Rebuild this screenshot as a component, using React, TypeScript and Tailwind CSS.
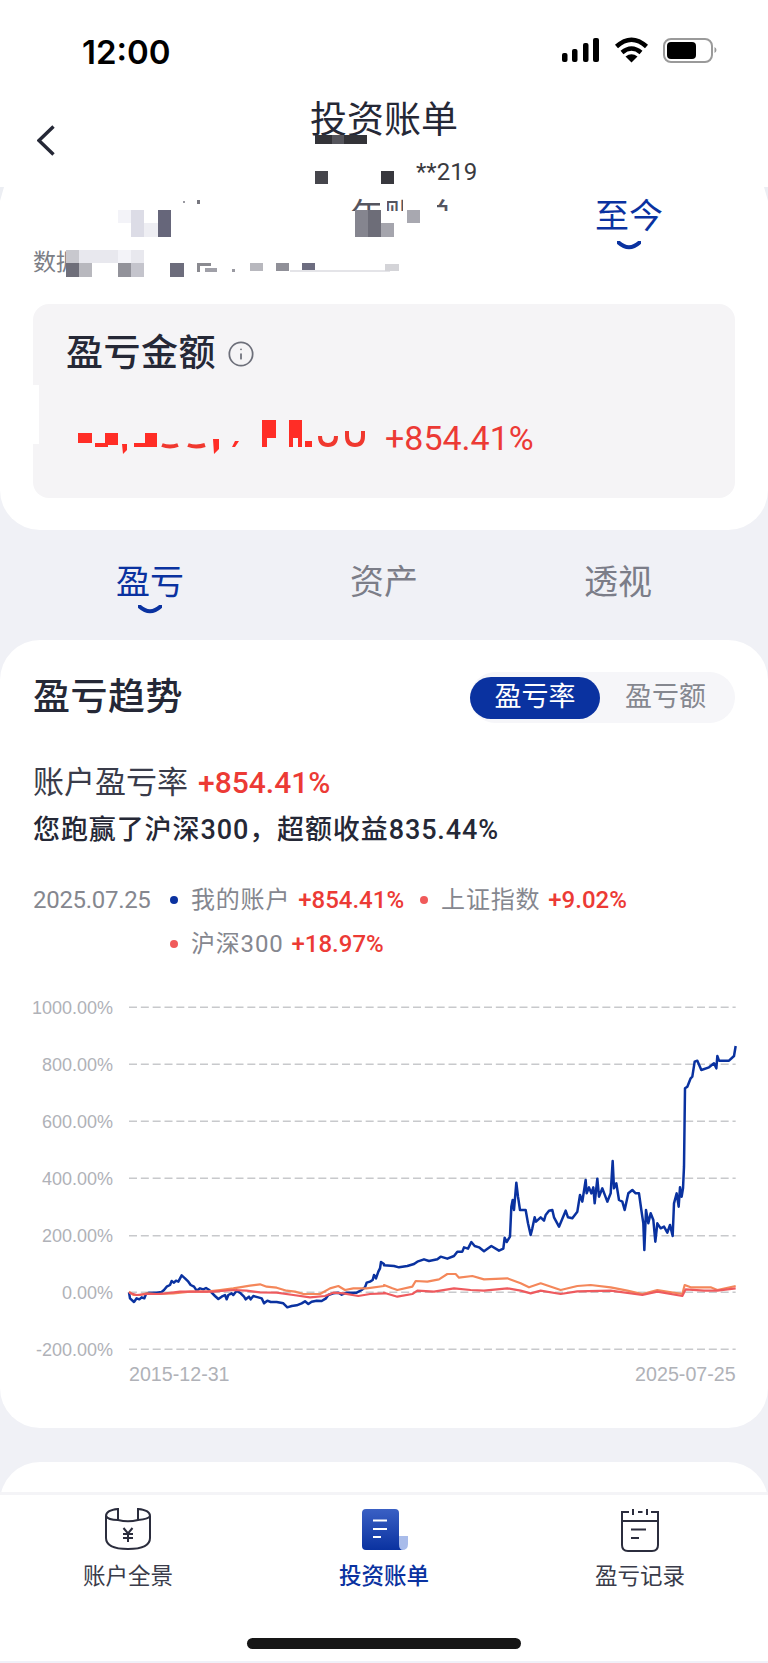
import { Info } from "lucide-react";

type Pt = [number, number];

// chart paths, in a 2304x1260 drawing space; the second half of each series starts at x=1152
const blueLeft: Pt[] = [[387,937],[390,955],[402,966],[410,955],[418,958],[425,952],[433,955],[438,942],[448,938],[470,938],[485,936],[492,930],[500,920],[510,915],[515,903],[522,908],[528,902],[535,905],[545,886],[555,895],[565,905],[572,915],[582,920],[590,932],[600,925],[610,928],[618,924],[628,930],[635,938],[645,948],[655,957],[665,950],[675,945],[680,958],[685,945],[695,940],[700,945],[710,932],[722,940],[732,950],[737,958],[747,950],[752,958],[760,948],[775,952],[785,955],[792,970],[802,962],[812,966],[830,966],[850,970],[862,982],[875,978],[890,976],[905,970],[915,964],[925,972],[935,965],[950,962],[965,963],[978,955],[985,945],[1000,940],[1015,938],[1025,944],[1040,938],[1055,938],[1070,938],[1085,930],[1095,922],[1100,908],[1110,905],[1118,900],[1122,885],[1128,895],[1135,875],[1140,865],[1143,846],[1152,852]];
const blueRight: Pt[] = [[0,856],[30,858],[45,862],[70,858],[90,852],[100,845],[120,838],[135,843],[160,838],[170,830],[190,836],[210,828],[220,815],[235,815],[240,802],[252,806],[262,786],[272,798],[285,802],[300,814],[322,798],[345,812],[358,806],[362,773],[368,786],[378,770],[382,680],[386,660],[390,690],[397,608],[402,650],[408,690],[415,690],[425,690],[432,730],[440,765],[445,745],[452,712],[456,725],[470,712],[480,722],[485,705],[495,692],[505,690],[510,712],[525,740],[545,692],[552,712],[565,715],[580,695],[588,645],[595,665],[605,600],[608,640],[615,622],[622,640],[628,622],[632,670],[640,596],[645,650],[655,625],[670,665],[680,640],[686,543],[690,625],[697,610],[705,660],[715,665],[722,690],[733,640],[745,630],[755,640],[765,640],[772,690],[778,730],[781,810],[786,690],[793,730],[800,700],[808,720],[814,785],[820,730],[830,745],[840,740],[850,758],[858,735],[866,768],[870,670],[878,640],[884,680],[888,622],[893,650],[897,625],[900,560],[903,325],[910,320],[920,295],[925,290],[932,245],[940,242],[952,270],[975,262],[990,250],[997,265],[1000,228],[1005,242],[1035,242],[1050,228],[1055,198]];
const orangeLeft: Pt[] = [[387,935],[400,945],[420,945],[440,940],[470,942],[520,940],[570,935],[620,935],[660,930],[700,925],[750,917],[780,913],[800,920],[830,923],[860,932],[885,935],[910,942],[960,942],[990,925],[1015,918],[1035,930],[1060,925],[1100,925],[1152,918]];
const orangeRight: Pt[] = [[0,915],[25,925],[40,930],[85,920],[95,903],[130,905],[165,898],[190,882],[215,882],[225,893],[265,888],[300,898],[370,895],[410,910],[435,922],[470,910],[530,930],[580,918],[620,915],[680,922],[730,932],[775,942],[820,930],[895,942],[902,915],[920,922],[980,922],[1000,930],[1055,918]];
const redLeft: Pt[] = [[387,938],[410,945],[440,942],[480,942],[540,935],[600,935],[640,935],[700,930],[740,932],[780,937],[830,938],[880,945],[930,952],[975,948],[1000,938],[1030,940],[1075,948],[1110,942],[1152,940]];
const redRight: Pt[] = [[0,938],[40,950],[85,942],[100,932],[150,935],[210,925],[260,930],[300,932],[370,925],[410,932],[440,940],[470,932],[530,942],[580,934],[680,932],[775,945],[820,935],[895,948],[905,928],[960,932],[1000,932],[1055,925]];

const toPoints = (left: Pt[], right: Pt[]) =>
  [...left, ...right.map(([x, y]): Pt => [x + 1152, y])].map((p) => p.join(",")).join(" ");

const yLabels = ["1000.00%", "800.00%", "600.00%", "400.00%", "200.00%", "0.00%", "-200.00%"];
const yLines = [82, 253, 424, 595, 767, 937, 1108];

// masked-out blocks in the header, page coordinates
const cells: [number, number, number, number, string][] = [
  [315, 135, 17, 9, "#333338"], [332, 135, 12, 9, "#55555c"], [344, 135, 23, 9, "#333338"],
  [315, 171, 13, 13, "#46464c"], [381, 171, 13, 13, "#38383e"],
  [118, 210, 13, 13, "#f3f3f8"], [131, 210, 13, 27, "#dcdce6"], [144, 223, 14, 14, "#eeeef3"], [158, 210, 13, 27, "#66667a"],
  [183, 201, 2, 2, "#9a9aa2"], [197, 200, 3, 4, "#77777f"],
  [350, 211, 104, 32, "#ffffff"], [380, 194, 7, 18, "#ffffff"], [403, 194, 34, 18, "#ffffff"],
  [355, 210, 13, 27, "#85858f"], [368, 210, 13, 27, "#6d6d78"], [381, 223, 13, 14, "#a5a5ad"], [407, 210, 13, 13, "#a8a8b0"],
  [66, 250, 13, 13, "#c8c8ce"], [66, 263, 13, 14, "#6f6f7a"], [79, 263, 13, 14, "#b8b8be"], [79, 250, 39, 13, "#e8e8ee"],
  [118, 250, 13, 13, "#f3f3f8"], [131, 250, 13, 13, "#e8e8ee"], [118, 263, 13, 14, "#92929a"], [131, 263, 13, 14, "#c4c4cc"],
  [170, 263, 14, 14, "#6d6d7c"], [197, 263, 14, 3, "#8a8a90"], [197, 266, 3, 6, "#8a8a90"], [205, 268, 12, 4, "#a0a0a8"],
  [232, 269, 3, 3, "#9a9aa2"], [250, 263, 13, 8, "#b8b8be"], [276, 263, 13, 8, "#909098"], [302, 263, 13, 8, "#6d6d80"],
  [290, 270, 100, 2, "#e4e4e8"], [385, 264, 14, 7, "#d4d4d8"],
  [33, 385, 6, 59, "#ffffff"],
];

// masked-out amount, page coordinates
const amountCells: [number, number, number, number][] = [
  [78, 433, 14, 10], [95, 443, 13, 4], [105, 433, 13, 12], [145, 433, 12, 14], [134, 443, 11, 4],
  [262, 420, 14, 18], [262, 438, 5, 9], [289, 420, 13, 18], [289, 438, 4, 9], [298, 438, 4, 9], [305, 441, 7, 6],
];

const Redactions = () => (
  <svg className="absolute left-0 top-0 w-[768px] h-[530px] pointer-events-none" viewBox="0 0 768 530">
    <path d="M0 201 L4 187 L0 187 Z M768 201 L764 187 L768 187 Z" fill="#eceef3" />
    {cells.map(([x, y, w, h, fill], i) => (
      <rect key={i} x={x} y={y} width={w} height={h} fill={fill} />
    ))}
    <g fill="#ff2d26">
      {amountCells.map(([x, y, w, h], i) => (
        <rect key={i} x={x} y={y} width={w} height={h} />
      ))}
      <path d="M122 444h5v6l-4 4zM213 439h6v10l-5 5zM235 441h4l-4 6h-3z" />
    </g>
    <g fill="none" stroke="#f0382f" strokeWidth="4">
      <path d="M162 445q8 3 16 0M188 445q8 3 17 0M320 436q0 9 8 9t8-9M347 431v5q0 9 8 9t8-9v-5" />
    </g>
  </svg>
);

const StatusIcons = () => (
  <svg className="w-[158px] h-[30px]" viewBox="560 36 158 30">
    <g fill="#000">
      <rect x="562" y="54" width="5.5" height="9" rx="2" />
      <rect x="572" y="50" width="5.5" height="13" rx="2" />
      <rect x="583" y="44" width="5.5" height="19" rx="2" />
      <rect x="593" y="39" width="6" height="24" rx="2" />
      <path d="M625.5 57.5 L631.5 63.5 L637.5 57.5 Q631.5 53 625.5 57.5 Z" />
    </g>
    <g fill="none" stroke="#000" strokeWidth="4.5">
      <path d="M616.5 47.5 Q631.5 34 646.5 47.5" />
      <path d="M622 53.5 Q631.5 45.5 641 53.5" />
    </g>
    <rect x="664" y="40" width="48" height="23" rx="7" fill="none" stroke="#9a9a9a" strokeWidth="2" />
    <rect x="667" y="43" width="29" height="17" rx="4" fill="#000" />
    <path d="M714.5 48v6q2-1 2-3t-2-3z" fill="#9a9a9a" />
  </svg>
);

const Smile = () => (
  <svg className="block w-[24px] h-[9px]" viewBox="0 0 24 9">
    <path d="M1.5 1.5 Q12 11 22.5 1.5" fill="none" stroke="#0a32a0" strokeWidth="4" strokeLinecap="round" />
  </svg>
);

const WalletIcon = () => (
  <svg className="w-[46px] h-[44px]" viewBox="15 12 46 44" fill="none" stroke="#2b2d3d" strokeWidth="2">
    <path d="M16 20 Q16 14 28 13 V24 Q18 24 16 20 V42 Q16 53 38 53 Q60 53 60 42 V20 Q59 23 48 24 V13 Q60 14 60 20" />
    <path d="M28 24 Q38 26.5 48 24" />
    <path d="M33.5 32 L38 37.5 L42.5 32 M38 37.5 V46 M33 38 H43 M33 42 H43" />
  </svg>
);

const BillIcon = () => (
  <svg className="w-[50px] h-[44px]" viewBox="18 12 50 44">
    <defs>
      <linearGradient id="billBody" x1="0" y1="0" x2="0" y2="1">
        <stop offset="0" stopColor="#3a60c4" />
        <stop offset="1" stopColor="#0a32a0" />
      </linearGradient>
    </defs>
    <path d="M58 40 H67 V48 Q67 54 61 54 H58 Z" fill="#a9bcea" />
    <path d="M25 13 H54 a4 4 0 0 1 4 4 V48 q0 6 4 6 H25 a4 4 0 0 1 -4 -4 V17 a4 4 0 0 1 4 -4 z" fill="url(#billBody)" />
    <g stroke="#fff" strokeWidth="2">
      <path d="M32 24.5 H46 M32 33 H46 M32 41 H40" />
    </g>
  </svg>
);

const RecordIcon = () => (
  <svg className="w-[46px] h-[44px]" viewBox="17 11 46 44" fill="none" stroke="#2b2d3d" strokeWidth="2">
    <path d="M22 24 V48 Q22 54 28 54 H52 Q58 54 58 48 V24 H22 V15 H29 M51 15 H58 V24" />
    <path d="M33 12 V18 M47 12 V18 M38 15 H42.5" />
    <path d="M31 32.5 H46 M31 41 H39" />
  </svg>
);

const TrendChart = () => (
  <svg className="block w-[768px] h-[420px] -mx-[33px]" viewBox="0 0 2304 1260">
    {yLines.map((y, i) => (
      <g key={y}>
        <line x1="387" x2="2207" y1={y} y2={y} stroke="#c8c9cc" strokeWidth="4.5" strokeDasharray="24 11.5" />
        <text x="339" y={y + 19} textAnchor="end" fontSize="54" fill="#b0b2b8" className="font-['Liberation_Sans',sans-serif]">
          {yLabels[i]}
        </text>
      </g>
    ))}
    <polyline points={toPoints(blueLeft, blueRight)} fill="none" stroke="#0a32a0" strokeWidth="7.5" strokeLinejoin="round" />
    <polyline points={toPoints(orangeLeft, orangeRight)} fill="none" stroke="#f4875a" strokeWidth="6.5" strokeLinejoin="round" />
    <polyline points={toPoints(redLeft, redRight)} fill="none" stroke="#ee5a5e" strokeWidth="6.5" strokeLinejoin="round" />
    <text x="387" y="1202" fontSize="59" fill="#b0b2b8" className="font-['Liberation_Sans',sans-serif]">2015-12-31</text>
    <text x="2207" y="1202" textAnchor="end" fontSize="59" fill="#b0b2b8" className="font-['Liberation_Sans',sans-serif]">2025-07-25</text>
  </svg>
);

const LegendItem = ({ dot, label, value, className }: { dot: string; label: string; value: string; className: string }) => (
  <div className={`flex items-center ${className}`}>
    <span className={`w-[8px] h-[8px] rounded-full ${dot}`} />
    <span className="ml-[13px] text-[24px] leading-[30px] tracking-[0.8px] text-[#85878f]">{label}</span>
    <span className="ml-[8px] text-[24px] leading-[30px] font-medium text-[#ec3a35]">{value}</span>
  </div>
);

export default function App() {
  return (
    <div className="relative w-[768px] h-[1663px] flex flex-col overflow-hidden bg-[#f0f1f6] text-[#252836] font-['Roboto','Noto_Sans_CJK_SC',sans-serif]">
      <div className="flex-1 overflow-hidden">
        <header className="h-[187px] bg-white">
          <div className="h-[104px] flex items-center justify-between pl-[82px] pr-[50px]">
            <span className="mt-[2px] text-[33px] font-semibold text-black font-['Inter',sans-serif]">12:00</span>
            <span className="-mt-[4px]"><StatusIcons /></span>
          </div>
          <div className="relative h-[34px] flex items-center justify-center">
            <svg className="absolute left-[37px] top-[21px] w-[18px] h-[31px]" viewBox="0 0 18 31">
              <path d="M16.5 1.5 L2 15.5 L16.5 29.5" fill="none" stroke="#252836" strokeWidth="3.4" />
            </svg>
            <h1 className="text-[37px] leading-[34px] font-normal">投资账单</h1>
          </div>
          <p className="mt-[22px] pl-[416px] text-[24px] leading-[24px] text-[#3a3a40]">**219</p>
        </header>

        <section className="h-[343px] bg-white rounded-b-[40px] px-[33px] pt-[12px]">
          <div className="h-[51px] flex items-start pl-[317px]">
            <span className="text-[34px] leading-[34px] text-[#55555f]">年账单</span>
            <div className="ml-[143px] flex flex-col items-center">
              <span className="text-[34px] leading-[34px] text-[#0a32a0]">至今</span>
              <span className="mt-[8px]"><Smile /></span>
            </div>
          </div>
          <p className="text-[23px] leading-[26px] text-[#7c7e86]">数据</p>
          <div className="mt-[28px] h-[194px] rounded-[16px] bg-[#f5f4f6] px-[33px] pt-[30px]">
            <div className="flex items-center">
              <h2 className="text-[37px] leading-[40px] font-medium tracking-[0.5px]">盈亏金额</h2>
              <Info className="ml-[11px] w-[28px] h-[28px] text-[#6d6f7a]" strokeWidth={1.5} />
            </div>
            <p className="mt-[43px] pl-[319px] text-[34px] leading-[42px] text-[#ec3a35]">+854.41%</p>
          </div>
        </section>

        <nav className="h-[110px] px-[33px] pt-[35px] grid grid-cols-3 justify-items-center">
          <div className="flex flex-col items-center">
            <span className="text-[34px] leading-[34px] text-[#0a32a0]">盈亏</span>
            <span className="mt-[6px]"><Smile /></span>
          </div>
          <span className="text-[34px] leading-[34px] text-[#7b7d88]">资产</span>
          <span className="text-[34px] leading-[34px] text-[#7b7d88]">透视</span>
        </nav>

        <section className="h-[788px] bg-white rounded-[40px] px-[33px] pt-[32px]">
          <div className="h-[51px] flex items-center justify-between">
            <h2 className="text-[37px] leading-[40px] font-medium tracking-[0.5px]">盈亏趋势</h2>
            <div className="w-[265px] h-[51px] flex items-center rounded-full bg-[#f6f6f9]">
              <span className="w-[130px] h-[42px] flex items-center justify-center rounded-full bg-[#0a32a0] text-white text-[27px]">盈亏率</span>
              <span className="flex-1 pr-[4px] text-center text-[27px] text-[#85878f]">盈亏额</span>
            </div>
          </div>
          <div className="mt-[42px] flex items-center h-[36px]">
            <span className="text-[31px] leading-[36px] text-[#3a3c4a]">账户盈亏率</span>
            <span className="ml-[10px] text-[30px] leading-[36px] font-medium text-[#ec3a35]">+854.41%</span>
          </div>
          <p className="mt-[14px] text-[27px] leading-[30px] font-medium tracking-[0.9px]">{"您跑赢了沪深300\uFF0C超额收益835.44%"}</p>
          <div className="mt-[40px] flex items-center h-[30px]">
            <span className="w-[137px] text-[24px] leading-[30px] tracking-[-0.3px] text-[#85878f]">2025.07.25</span>
            <LegendItem dot="bg-[#0a32a0]" label="我的账户" value="+854.41%" className="" />
            <LegendItem dot="bg-[#f05a5a]" label="上证指数" value="+9.02%" className="ml-[16px]" />
          </div>
          <div className="mt-[14px] flex items-center h-[30px] pl-[137px]">
            <LegendItem dot="bg-[#f05a5a]" label="沪深300" value="+18.97%" className="" />
          </div>
          <div className="mt-[21px]">
            <TrendChart />
          </div>
        </section>

        <section className="mt-[34px] h-[60px] bg-white rounded-t-[40px]" />
      </div>

      <footer className="h-[171px] shrink-0 bg-white border-t-[3px] border-[#f4f4f7] flex flex-col">
        <div className="grid grid-cols-3 pt-[13px]">
          <div className="flex flex-col items-center">
            <WalletIcon />
            <span className="mt-[11px] text-[22.5px] leading-[26px] text-[#3a3c4a]">账户全景</span>
          </div>
          <div className="flex flex-col items-center">
            <BillIcon />
            <span className="mt-[11px] text-[22.5px] leading-[26px] font-medium text-[#0a32a0]">投资账单</span>
          </div>
          <div className="flex flex-col items-center">
            <RecordIcon />
            <span className="mt-[11px] text-[22.5px] leading-[26px] text-[#3a3c4a]">盈亏记录</span>
          </div>
        </div>
        <div className="mt-[49px] mx-auto w-[274px] h-[11px] rounded-full bg-[#161616]" />
        <div className="mt-auto h-[2px] bg-[#f0f0f8]" />
      </footer>

      <Redactions />
    </div>
  );
}
